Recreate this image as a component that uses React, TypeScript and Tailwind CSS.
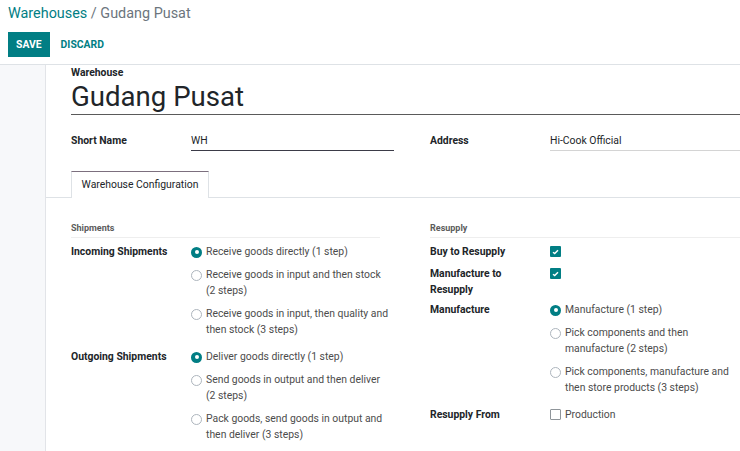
import React from 'react';

const TEAL = '#017e84';

function Radio({ checked }: { checked?: boolean }) {
  if (checked) {
    return (
      <span className="mt-[2.5px] flex h-[11px] w-[11px] shrink-0 items-center justify-center rounded-full bg-[#017e84]">
        <span className="h-[4px] w-[4px] rounded-full bg-white" />
      </span>
    );
  }
  return <span className="mt-[2.5px] h-[11px] w-[11px] shrink-0 rounded-full border border-[#adb5bd] bg-white" />;
}

function Checkbox({ checked }: { checked?: boolean }) {
  if (checked) {
    return (
      <span className="mt-[2px] flex h-[11px] w-[11px] shrink-0 items-center justify-center rounded-[1px] bg-[#017e84]">
        <svg width="7" height="6" viewBox="0 0 7 6">
          <path d="M1 3.2 L2.7 4.6 L6 1.2" stroke="white" strokeWidth="1.4" fill="none" />
        </svg>
      </span>
    );
  }
  return <span className="mt-[2px] h-[11px] w-[11px] shrink-0 rounded-[1px] border border-[#8f959a] bg-white" />;
}

// each option is given as its lines, so it wraps where the original does
function Options({ items, selected }: { items: string[][]; selected: number }) {
  return (
    <div className="flex flex-col gap-[7px]">
      {items.map((lines, i) => (
        <div key={i} className="flex items-start gap-[4px]">
          <Radio checked={i === selected} />
          <span className="whitespace-nowrap text-[#4c4c4c]">
            {lines.map((l, j) => (
              <React.Fragment key={j}>
                {j > 0 && <br />}
                {l}
              </React.Fragment>
            ))}
          </span>
        </div>
      ))}
    </div>
  );
}

function Row({ label, children, className = '' }: { label: React.ReactNode; children: React.ReactNode; className?: string }) {
  return (
    <div className={`flex ${className}`}>
      <div className="w-[120px] shrink-0 pr-2 font-bold text-[#212529]">{label}</div>
      <div className="flex-1">{children}</div>
    </div>
  );
}

export default function App() {
  return (
    <div className="h-[451px] w-[740px] overflow-hidden bg-white font-['Roboto',sans-serif] text-[10.4px] leading-[16px] text-[#4c4c4c]">
      {/* control panel */}
      <div className="h-[65px] border-b border-[#dee2e6] px-[8px]">
        <div className="pt-[4px] text-[14.4px] leading-[20px]">
          <span style={{ color: TEAL }}>Warehouses</span>
          <span className="text-[#6c757d]"> / Gudang Pusat</span>
        </div>
        <div className="mt-[8px] flex items-center">
          <button className="h-[25px] bg-[#017e84] px-[8px] text-[10.4px] font-bold text-white">SAVE</button>
          <button className="ml-[4px] h-[25px] px-[7px] text-[10.4px] font-bold text-[#017e84]">DISCARD</button>
        </div>
      </div>

      <div className="flex h-[386px]">
        <div className="w-[46px] shrink-0 border-r border-[#e2e4e8] bg-[#f7f8fa]" />
        <div className="flex-1 overflow-hidden">
          <div className="pl-[25px] pt-[1px]">
            <div className="text-[10.4px] font-bold leading-[14px] text-[#212529]">Warehouse</div>
            <div className="mt-[1px] border-b border-[#5a5a5a] pb-[1px] text-[27.6px] leading-[32px] text-[#212529]">
              Gudang Pusat
            </div>

            <div className="mt-[18px] flex">
              <div className="flex w-[323px] shrink-0">
                <div className="w-[120px] font-bold text-[#212529]">Short Name</div>
                <div className="w-[203px] border-b border-[#3b3b48] pb-[1px] text-[#212529]">WH</div>
              </div>
              <div className="ml-[36px] flex flex-1">
                <div className="w-[120px] font-bold text-[#212529]">Address</div>
                <div className="flex-1 border-b border-[#d4d4d4] pb-[1px] text-[#212529]">Hi-Cook Official</div>
              </div>
            </div>
          </div>

          {/* tabs */}
          <div className="mt-[20px] flex border-b border-[#dee2e6] pl-[25px]">
            <div className="-mb-px h-[27px] w-[138px] border border-b-0 border-[#dee2e6] border-t-[#7c6f7e] bg-white pt-[5px] text-center text-[#212529]">
              Warehouse Configuration
            </div>
          </div>

          <div className="flex pl-[25px] pt-[23px]">
            {/* left group */}
            <div className="w-[323px] shrink-0 pr-[14px]">
              <div className="border-b border-[#eeeeee] pb-[2px] text-[9px] font-bold leading-[14px] text-[#5c5c5c]">Shipments</div>
              <Row label="Incoming Shipments" className="mt-[6px]">
                <Options
                  selected={0}
                  items={[
                    ['Receive goods directly (1 step)'],
                    ['Receive goods in input and then stock', '(2 steps)'],
                    ['Receive goods in input, then quality and', 'then stock (3 steps)'],
                  ]}
                />
              </Row>
              <Row label="Outgoing Shipments" className="mt-[11px]">
                <Options
                  selected={0}
                  items={[
                    ['Deliver goods directly (1 step)'],
                    ['Send goods in output and then deliver', '(2 steps)'],
                    ['Pack goods, send goods in output and', 'then deliver (3 steps)'],
                  ]}
                />
              </Row>
            </div>

            {/* right group */}
            <div className="ml-[36px] flex-1">
              <div className="border-b border-[#eeeeee] pb-[2px] text-[9px] font-bold leading-[14px] text-[#5c5c5c]">Resupply</div>
              <Row label="Buy to Resupply" className="mt-[6px]">
                <Checkbox checked />
              </Row>
              <Row label={<>Manufacture to<br />Resupply</>} className="mt-[6px]">
                <Checkbox checked />
              </Row>
              <Row label="Manufacture" className="mt-[4px]">
                <Options
                  selected={0}
                  items={[
                    ['Manufacture (1 step)'],
                    ['Pick components and then', 'manufacture (2 steps)'],
                    ['Pick components, manufacture and', 'then store products (3 steps)'],
                  ]}
                />
              </Row>
              <Row label="Resupply From" className="mt-[11px]">
                <div className="flex items-start gap-[4px]">
                  <Checkbox />
                  <span className="text-[#4c4c4c]">Production</span>
                </div>
              </Row>
            </div>
          </div>
        </div>
      </div>
    </div>
  );
}
